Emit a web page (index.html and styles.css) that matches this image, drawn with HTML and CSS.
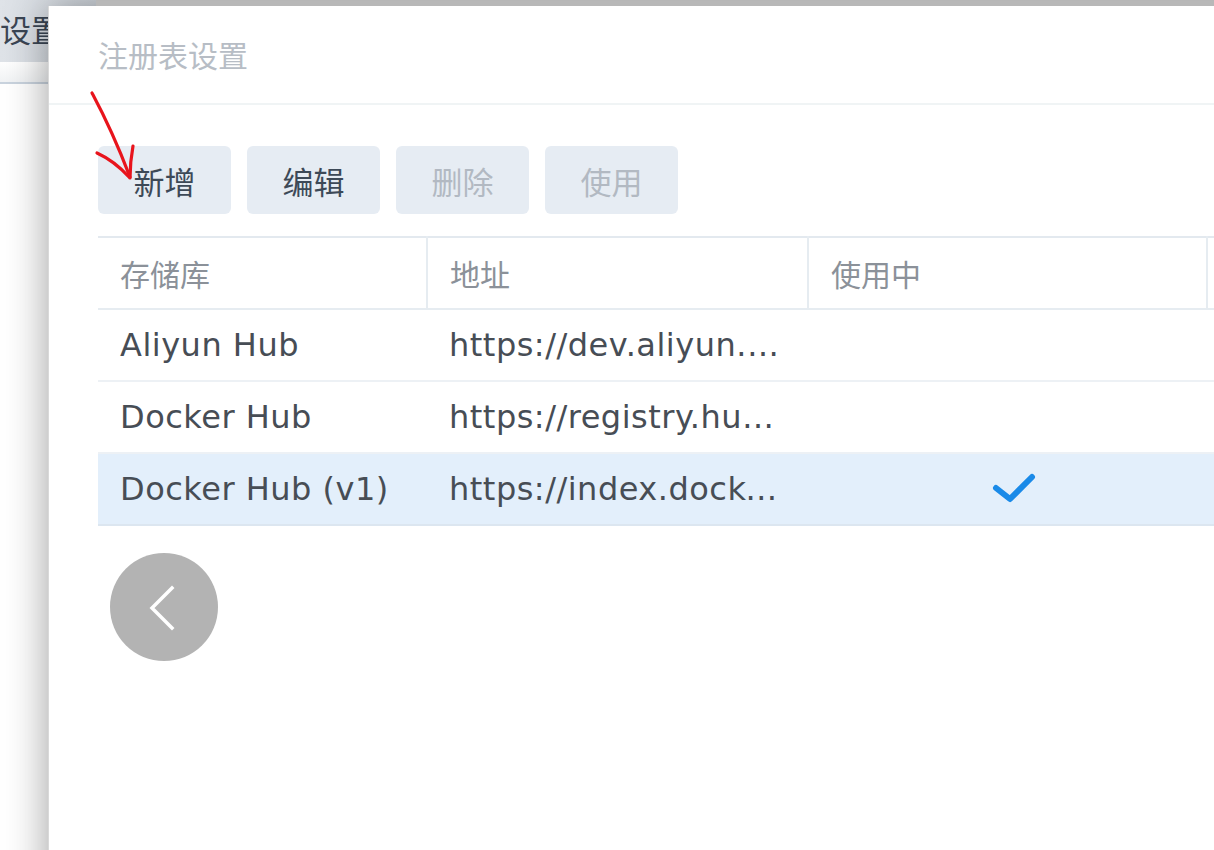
FILE: index.html
```html
<!DOCTYPE html>
<html lang="zh">
<head>
<meta charset="utf-8">
<link rel="stylesheet" href="styles.css">
</head>
<body>
<div class="page">
  <div class="bg-tab">设置</div>
  <div class="bg-gap"></div>
  <div class="bg-rule"></div>
</div>

<div class="dialog">
  <div class="dialog-head">注册表设置</div>
  <div class="dialog-body">
    <div class="toolbar">
      <button class="btn">新增</button>
      <button class="btn">编辑</button>
      <button class="btn disabled">删除</button>
      <button class="btn disabled">使用</button>
    </div>
    <table class="grid">
      <colgroup>
        <col class="c1"><col class="c2"><col class="c3"><col class="c4">
      </colgroup>
      <thead>
        <tr><th>存储库</th><th>地址</th><th>使用中</th><th></th></tr>
      </thead>
      <tbody>
        <tr><td>Aliyun Hub</td><td>https://dev.aliyun.com/search.html</td><td></td><td></td></tr>
        <tr><td>Docker Hub</td><td>https://registry.hub.docker.com</td><td></td><td></td></tr>
        <tr class="selected"><td>Docker Hub (v1)</td><td>https://index.docker.io</td><td class="check"><svg width="44" height="32" viewBox="0 0 44 32"><path d="M4 15 L18 26 L40 4" fill="none" stroke="#1a8ae8" stroke-width="6" stroke-linecap="round" stroke-linejoin="round"/></svg></td><td></td></tr>
      </tbody>
    </table>
  </div>
</div>

<svg class="annot" width="160" height="200" viewBox="0 0 160 200">
  <path d="M92 93 C100 108 112 130 130 177" fill="none" stroke="#e8141c" stroke-width="3.2" stroke-linecap="round"/>
  <path d="M97 153 C108 158 119 166 129 177" fill="none" stroke="#e8141c" stroke-width="3.2" stroke-linecap="round"/>
  <path d="M133 146 C131 157 130 166 130 178" fill="none" stroke="#e8141c" stroke-width="3.2" stroke-linecap="round"/>
</svg>

<div class="nav-prev">
  <svg width="108" height="108" viewBox="0 0 108 108"><path d="M62 35 L42 55 L62 75" fill="none" stroke="#fff" stroke-width="3.5" stroke-linecap="square"/></svg>
</div>
</body>
</html>
```

FILE: styles.css
```css
html, body {
  margin: 0;
  padding: 0;
  width: 1214px;
  height: 850px;
  overflow: hidden;
  background: #ffffff;
  font-family: "Noto Sans CJK SC", "DejaVu Sans", sans-serif;
}

.page {
  width: 1214px;
  height: 850px;
  background: linear-gradient(#d8d8d8, #e4e4e4 6px, #ffffff 7px);
}

.bg-tab {
  width: 96px;
  height: 62px;
  box-sizing: border-box;
  padding-left: 0;
  background: linear-gradient(90deg, #dfe3e8, #d5dbe2);
  color: #3b4654;
  font-size: 31px;
  line-height: 58px;
  white-space: nowrap;
}

.bg-gap {
  height: 20px;
  background: linear-gradient(#ffffff, #f1f3f5);
}

.bg-rule {
  height: 2px;
  width: 96px;
  background: #c9d3de;
}

.dialog {
  position: absolute;
  left: 48px;
  top: 6px;
  width: 1300px;
  height: 900px;
  background: #ffffff;
  border-left: 1px solid #d9d9d9;
  box-shadow: 0 0 40px rgba(0, 0, 0, 0.38);
}

.dialog-head {
  height: 99px;
  box-sizing: border-box;
  padding-left: 49px;
  border-bottom: 2px solid #f0f4f5;
  color: #b7bdc5;
  font-size: 30px;
  line-height: 97px;
}

.dialog-body {
  padding: 41px 0 0 49px;
}

.toolbar {
  display: flex;
  gap: 16px;
  margin-bottom: 22px;
}

.btn {
  width: 133px;
  height: 68px;
  border: none;
  border-radius: 6px;
  background: #e6ecf3;
  color: #3d4957;
  font-family: "Noto Sans CJK SC", "DejaVu Sans", sans-serif;
  font-size: 31px;
  padding: 0;
}

.btn.disabled {
  color: #b2b9c2;
}

.grid {
  border-collapse: collapse;
  table-layout: fixed;
  width: 1309px;
  border-top: 2px solid #e3e9ef;
}

.grid col.c1 { width: 329px; }
.grid col.c2 { width: 381px; }
.grid col.c3 { width: 399px; }
.grid col.c4 { width: 200px; }

.grid th {
  height: 70px;
  padding: 0 0 0 22px;
  text-align: left;
  font-weight: normal;
  font-size: 30px;
  color: #8b9199;
  border-bottom: 2px solid #e6ecf1;
  border-right: 2px solid #e6ecf1;
}

.grid td {
  height: 70px;
  padding: 0 28px 0 22px;
  font-family: "DejaVu Sans", "Noto Sans CJK SC", sans-serif;
  font-size: 32px;
  line-height: 40px;
  letter-spacing: 0.5px;
  color: #474d55;
  white-space: nowrap;
  overflow: hidden;
  text-overflow: ellipsis;
  border-bottom: 2px solid #edf1f5;
}

.grid tr.selected td {
  background: #e3effb;
  border-bottom-color: #dce6f0;
}

.grid td.check {
  text-align: center;
  padding: 0;
  line-height: 0;
}

.grid td.check svg {
  position: relative;
  left: 6px;
}

.annot {
  position: absolute;
  left: 0;
  top: 0;
  pointer-events: none;
}

.nav-prev {
  position: absolute;
  left: 110px;
  top: 553px;
  width: 108px;
  height: 108px;
  border-radius: 50%;
  background: #b3b3b3;
}

.nav-prev svg {
  display: block;
}
```
